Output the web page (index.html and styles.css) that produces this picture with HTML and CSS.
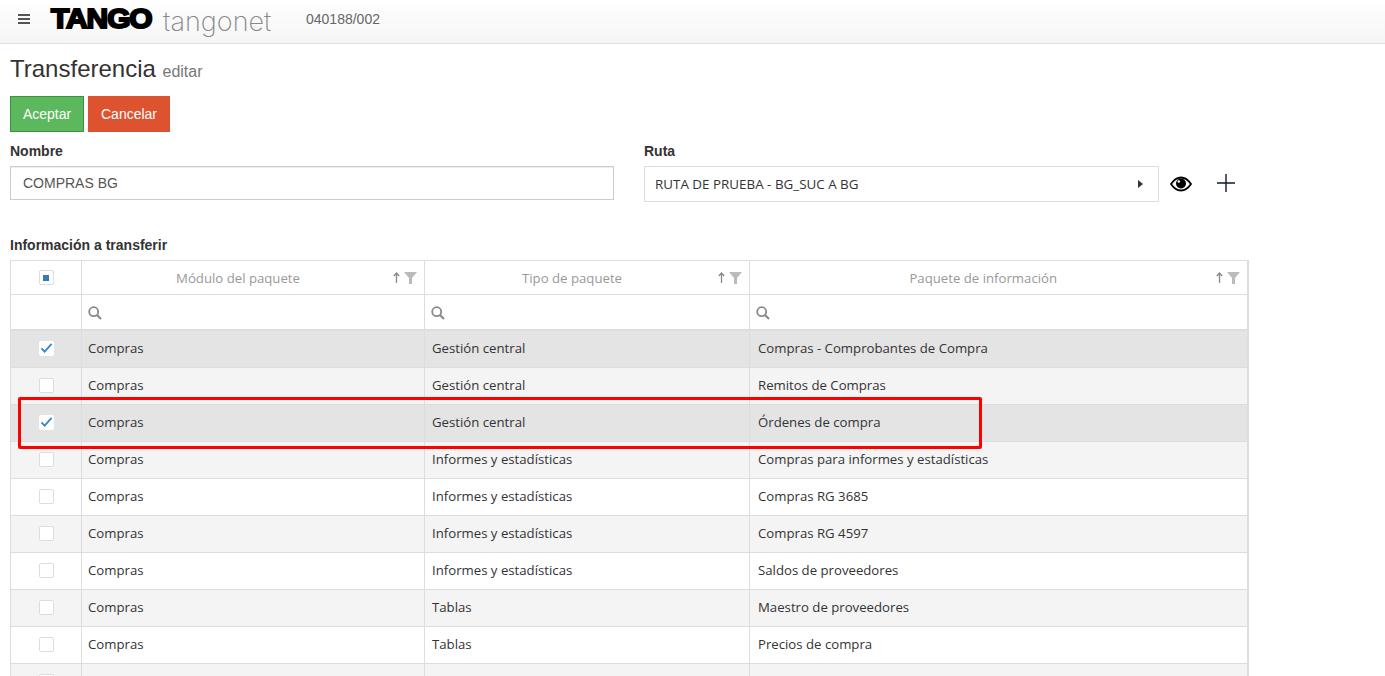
FILE: index.html
```html
<!DOCTYPE html>
<html lang="es">
<head>
<meta charset="utf-8">
<title>Transferencia</title>
<link rel="stylesheet" href="styles.css">
</head>
<body>
<header class="topbar">
  <svg class="menu-icon" width="12" height="10" viewBox="0 0 12 10"><path d="M0 1h12M0 5h12M0 9h12" stroke="#555" stroke-width="2"/></svg>
  <span class="logo-tango">TANGO</span>
  <span class="logo-net">tangonet</span>
  <span class="company">040188/002</span>
</header>
<main class="page">
  <h1 class="title">Transferencia <small class="subtitle">editar</small></h1>
  <div class="actions">
    <button class="btn btn-ok">Aceptar</button>
    <button class="btn btn-cancel">Cancelar</button>
  </div>
  <div class="form-row">
    <div class="field field-name">
      <label class="label">Nombre</label>
      <div class="input">COMPRAS BG</div>
    </div>
    <div class="field field-route">
      <label class="label">Ruta</label>
      <div class="route-line">
        <div class="select">RUTA DE PRUEBA - BG_SUC A BG
          <svg class="caret" width="5" height="8" viewBox="0 0 5 8"><path d="M0 0l5 4-5 4z" fill="#333"/></svg>
        </div>
        <svg class="eye" width="22" height="16" viewBox="0 0 22 16"><path d="M1 8c3-4.500 6-6.500 10-6.500S18 3.500 21 8c-3 4.500-6 6.500-10 6.500S4 12.500 1 8z" fill="#fff" stroke="#000" stroke-width="1.800"/><circle cx="11" cy="7.500" r="5" fill="#000"/><circle cx="8.800" cy="5.500" r="1.300" fill="#fff"/></svg>
        <svg class="plus" width="18" height="18" viewBox="0 0 18 18"><path d="M0 9h18M9 0v18" stroke="#0b1a2b" stroke-width="1.400"/></svg>
      </div>
    </div>
  </div>
  <h2 class="section">Información a transferir</h2>
  <table class="grid">
    <colgroup><col class="c0"><col class="c1"><col class="c2"><col class="c3"></colgroup>
    <thead>
      <tr class="head">
        <th><span class="check check-partial"><i></i></span></th>
        <th><div class="th-in">Módulo del paquete<span class="th-icons"><svg width="7" height="11" viewBox="0 0 7 11"><path d="M3.500 11V1M.8 4l2.700-3 2.700 3" fill="none" stroke="#888" stroke-width="1.300"/></svg><svg width="13" height="12" viewBox="0 0 13 12"><path d="M0 0h13L8 6v6H5V6z" fill="#bbb"/></svg></span></div></th>
        <th><div class="th-in">Tipo de paquete<span class="th-icons"><svg width="7" height="11" viewBox="0 0 7 11"><path d="M3.500 11V1M.8 4l2.700-3 2.700 3" fill="none" stroke="#888" stroke-width="1.300"/></svg><svg width="13" height="12" viewBox="0 0 13 12"><path d="M0 0h13L8 6v6H5V6z" fill="#bbb"/></svg></span></div></th>
        <th><div class="th-in">Paquete de información<span class="th-icons"><svg width="7" height="11" viewBox="0 0 7 11"><path d="M3.500 11V1M.8 4l2.700-3 2.700 3" fill="none" stroke="#888" stroke-width="1.300"/></svg><svg width="13" height="12" viewBox="0 0 13 12"><path d="M0 0h13L8 6v6H5V6z" fill="#bbb"/></svg></span></div></th>
      </tr>
      <tr class="filter">
        <td></td>
        <td><svg class="search" width="14" height="14" viewBox="0 0 14 14"><circle cx="5.700" cy="5.700" r="4.500" fill="none" stroke="#888" stroke-width="1.800"/><path d="M9 9l4 4" stroke="#888" stroke-width="2.200"/></svg></td>
        <td><svg class="search" width="14" height="14" viewBox="0 0 14 14"><circle cx="5.700" cy="5.700" r="4.500" fill="none" stroke="#888" stroke-width="1.800"/><path d="M9 9l4 4" stroke="#888" stroke-width="2.200"/></svg></td>
        <td><svg class="search" width="14" height="14" viewBox="0 0 14 14"><circle cx="5.700" cy="5.700" r="4.500" fill="none" stroke="#888" stroke-width="1.800"/><path d="M9 9l4 4" stroke="#888" stroke-width="2.200"/></svg></td>
      </tr>
    </thead>
    <tbody>
      <tr class="sel first"><td><span class="check"><svg width="14" height="12" viewBox="0 0 14 12"><path d="M1.500 6.500l3.500 3.500 7.500-8.500" fill="none" stroke="#3a87c8" stroke-width="2"/></svg></span></td><td>Compras</td><td>Gestión central</td><td>Compras - Comprobantes de Compra</td></tr>
      <tr class="alt"><td><span class="check"></span></td><td>Compras</td><td>Gestión central</td><td>Remitos de Compras</td></tr>
      <tr class="sel"><td><span class="check"><svg width="14" height="12" viewBox="0 0 14 12"><path d="M1.500 6.500l3.500 3.500 7.500-8.500" fill="none" stroke="#3a87c8" stroke-width="2"/></svg></span></td><td>Compras</td><td>Gestión central</td><td>Órdenes de compra</td></tr>
      <tr class="alt"><td><span class="check"></span></td><td>Compras</td><td>Informes y estadísticas</td><td>Compras para informes y estadísticas</td></tr>
      <tr><td><span class="check"></span></td><td>Compras</td><td>Informes y estadísticas</td><td>Compras RG 3685</td></tr>
      <tr class="alt"><td><span class="check"></span></td><td>Compras</td><td>Informes y estadísticas</td><td>Compras RG 4597</td></tr>
      <tr><td><span class="check"></span></td><td>Compras</td><td>Informes y estadísticas</td><td>Saldos de proveedores</td></tr>
      <tr class="alt"><td><span class="check"></span></td><td>Compras</td><td>Tablas</td><td>Maestro de proveedores</td></tr>
      <tr><td><span class="check"></span></td><td>Compras</td><td>Tablas</td><td>Precios de compra</td></tr>
      <tr class="alt"><td><span class="check"></span></td><td></td><td></td><td></td></tr>
    </tbody>
  </table>
  <div class="annotation"></div>
</main>
</body>
</html>
```
FILE: styles.css
```css
html, body { margin: 0; padding: 0; height: 676px; overflow: hidden; background: #fff; }
body { font-family: "Liberation Sans", Arial, sans-serif; color: #333; position: relative; }

.topbar {
  height: 43px; border-bottom: 1px solid #e1e1e1;
  background: linear-gradient(#fff, #f5f5f5);
  display: flex; align-items: center; padding-left: 18px; box-sizing: content-box;
}
.menu-icon { margin-right: 21px; margin-top: -5px; flex: none; }
.logo-tango {
  font: 900 28px/1 "Liberation Sans", sans-serif; color: #000; -webkit-text-stroke: 2px #000;
  letter-spacing: -1px; width: 103px; margin-top: -5px; transform-origin: left; transform: scaleX(1.07); flex: none;
}
.logo-net { font: 200 27px/1 Inter, sans-serif; color: #888; width: 143px; margin-left: 9px; margin-top: -1px; white-space: nowrap; flex: none; }
.company { font-size: 14px; color: #666; margin-top: -5px; }

.page { padding: 0 10px; }
.title { font-size: 24px; font-weight: 400; margin: 11px 0 0; line-height: 27px; color: #333; }
.subtitle { font-size: 16px; color: #777; font-weight: 400; }
.actions { display: flex; gap: 4px; margin-top: 11px; }
.btn { height: 36px; border: 1px solid; border-radius: 0; font: 14px "Liberation Sans", sans-serif; color: #fff; padding: 0; }
.btn-ok { width: 74px; background: #5cb85c; border-color: #3d9140; }
.btn-cancel { width: 82px; background: #dd5330; border-color: #dd5330; }

.form-row { display: flex; margin-top: 11px; }
.field-name { width: 604px; margin-right: 30px; }
.field-route { flex: 1; }
.label { display: block; font-size: 14px; font-weight: 700; line-height: 16px; margin-bottom: 7px; color: #333; }
.input { box-sizing: border-box; height: 34px; border: 1px solid #ccc; padding-left: 12px; font-size: 14px; line-height: 32px; color: #555; box-shadow: inset 0 1px 1px rgba(0,0,0,.075); }
.route-line { display: flex; align-items: center; }
.select { box-sizing: border-box; width: 515px; height: 36px; border: 1px solid #ddd; padding: 0 15px 0 10px; font: 13.4px "Open Sans", sans-serif; color: #333; display: flex; align-items: center; justify-content: space-between; }
.eye { margin-left: 11px; }
.plus { margin-left: 25px; margin-top: -2px; }

.section { font-size: 14px; font-weight: 700; line-height: 16px; margin: 35px 0 7px; color: #333; }

.grid { border-collapse: collapse; table-layout: fixed; width: 1238px; font: 13.2px "Open Sans", sans-serif; color: #333; border: 1px solid #ddd; border-right-width: 2px; }
.c0 { width: 71px; } .c1 { width: 343px; } .c2 { width: 325px; } .c3 { width: 498px; }
.grid th, .grid td { border: 1px solid #ddd; padding: 0 7px; box-sizing: border-box; text-align: left; font-weight: 400; }
.grid tr { height: 37px; }
.grid tr.head { height: 34px; }
.grid tr.filter { height: 35px; }
.grid tr.first { height: 38px; }
.grid tr.filter td { border-bottom: 2px solid #ddd; line-height: 0; padding-left: 6px; }
.grid tbody td { padding-bottom: 2px; }
.grid tbody tr.first td { padding-bottom: 1px; }
.grid tbody td:nth-child(2) { padding-left: 6px; }
.grid tbody td:nth-child(4) { padding-left: 8px; }
.search { margin-top: 2px; }
.grid th:first-child, .grid td:first-child { text-align: center; padding-left: 0; padding-right: 0; }
.th-in { position: relative; text-align: center; color: #999; padding-right: 30px; }
.th-icons { position: absolute; right: 0; top: 3px; display: flex; gap: 4px; align-items: center; }
.sel { background: #e4e4e4; }
.alt { background: #f4f4f4; }
.check { display: flex; align-items: center; justify-content: center; box-sizing: border-box; width: 15px; height: 15px; margin: 0 auto; background: #fff; border: 1px solid #ddd; border-radius: 2px; }
.sel .check { border-color: #fff; }
.check-partial i { display: block; width: 6px; height: 6px; background: #337ab7; flex: none; }
.annotation { position: absolute; left: 18px; top: 397px; width: 958px; height: 46px; border: 3px solid #f00; border-radius: 2px; }
```
